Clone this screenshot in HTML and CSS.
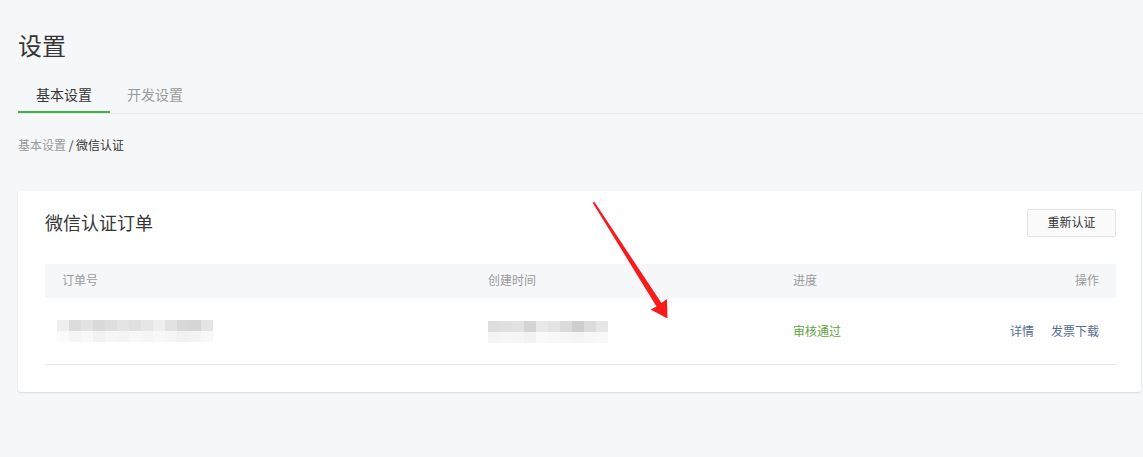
FILE: index.html
```html
<!DOCTYPE html>
<html lang="zh-CN">
<head>
<meta charset="utf-8">
<title>设置</title>
<link rel="stylesheet" href="styles.css">
</head>
<body>
<div class="page">
  <h1 class="title">设置</h1>
  <div class="tabs">
    <div class="tab active">基本设置</div>
    <div class="tab">开发设置</div>
  </div>
  <div class="crumb"><span class="crumb-link">基本设置</span> / 微信认证</div>
  <div class="card">
    <div class="card-head">
      <div class="card-title">微信认证订单</div>
      <button class="btn">重新认证</button>
    </div>
    <div class="table">
      <div class="thead">
        <div class="cell">订单号</div>
        <div class="cell">创建时间</div>
        <div class="cell">进度</div>
        <div class="cell right">操作</div>
      </div>
      <div class="trow">
        <div class="cell">
          <div class="mosaic first">
            <div class="m-row top">
              <i style="background:#eeeeee"></i><i style="background:#dcdcdc"></i><i style="background:#e2e2e2"></i><i style="background:#dadada"></i><i style="background:#dedede"></i><i style="background:#e4e4e4"></i><i style="background:#e0e0e0"></i><i style="background:#e6e6e6"></i><i style="background:#eeeeee"></i><i style="background:#e2e2e2"></i><i style="background:#d8d8d8"></i><i style="background:#d6d6d6"></i><i style="background:#e4e4e4"></i>
            </div>
            <div class="m-row bottom">
              <i style="background:#fafafa"></i><i style="background:#f5f5f5"></i><i style="background:#f8f8f8"></i><i style="background:#f2f2f2"></i><i style="background:#f6f6f6"></i><i style="background:#f4f4f4"></i><i style="background:#f7f7f7"></i><i style="background:#f5f5f5"></i><i style="background:#f8f8f8"></i><i style="background:#f6f6f6"></i><i style="background:#f1f1f1"></i><i style="background:#f3f3f3"></i><i style="background:#f8f8f8"></i>
            </div>
          </div>
        </div>
        <div class="cell">
          <div class="mosaic">
            <div class="m-row top">
              <i style="background:#dedede"></i><i style="background:#e0e0e0"></i><i style="background:#e2e2e2"></i><i style="background:#d4d4d4"></i><i style="background:#e8e8e8"></i><i style="background:#e4e4e4"></i><i style="background:#dadada"></i><i style="background:#cecece"></i><i style="background:#dcdcdc"></i><i style="background:#e6e6e6"></i>
            </div>
            <div class="m-row bottom">
              <i style="background:#f4f4f4"></i><i style="background:#f6f6f6"></i><i style="background:#f5f5f5"></i><i style="background:#f2f2f2"></i><i style="background:#fafafa"></i><i style="background:#f8f8f8"></i><i style="background:#f6f6f6"></i><i style="background:#f4f4f4"></i><i style="background:#f7f7f7"></i><i style="background:#f8f8f8"></i>
            </div>
          </div>
        </div>
        <div class="cell status">审核通过</div>
        <div class="cell right links"><a>详情</a><a>发票下载</a></div>
      </div>
    </div>
  </div>
</div>
<svg class="arrow" width="1143" height="457" viewBox="0 0 1143 457" aria-hidden="true">
  <polygon points="592.5,202.5 594.5,202 661.5,303 667,299 667.5,318.5 650.5,309.5 656.5,306.5" fill="#f71b1b"/>
</svg>
</body>
</html>
```
FILE: styles.css
```css
* { box-sizing: border-box; }
html, body {
  margin: 0;
  padding: 0;
  background: #f6f7f9;
  font-family: "Noto Sans CJK SC", "Noto Sans", sans-serif;
  color: #353535;
}
.page {
  padding: 28px 0 0 18px;
  height: 457px;
  overflow: hidden;
}
.title {
  margin: 0;
  font-size: 24px;
  font-weight: normal;
  line-height: 34px;
  color: #353535;
}
.tabs {
  display: flex;
  margin-top: 16px;
  border-bottom: 1px solid #e7e7e7;
}
.tab {
  padding: 0 17px;
  font-size: 14px;
  line-height: 32px;
  height: 35px;
  color: #9a9a9a;
  text-align: center;
}
.tab.active {
  width: 92px;
  color: #353535;
  border-bottom: 2px solid #3eb341;
  margin-bottom: -1px;
}
.crumb {
  margin-top: 22px;
  font-size: 12px;
  line-height: 18px;
  color: #353535;
}
.crumb-link { color: #9a9a9a; }
.card {
  margin-top: 37px;
  width: 1123px;
  background: #fff;
  border-radius: 3px;
  box-shadow: 0 1px 2px rgba(0,0,0,0.12);
  padding: 18px 25px 27px 27px;
}
.card-head {
  display: flex;
  justify-content: space-between;
  align-items: center;
  height: 28px;
}
.card-title {
  font-size: 18px;
  line-height: 28px;
  color: #353535;
  margin-bottom: 3px;
}
.btn {
  width: 89px;
  height: 28px;
  border: 1px solid #e4e4e4;
  border-radius: 2px;
  background: #fafafa;
  font-family: inherit;
  font-size: 12px;
  color: #353535;
  padding: 0 0 3px;
}
.table {
  margin-top: 27px;
}
.thead, .trow {
  display: grid;
  grid-template-columns: 426px 305px 1fr 220px;
  align-items: center;
}
.thead {
  height: 34px;
  background: #f6f7f9;
  font-size: 12px;
  color: #9a9a9a;
  padding-bottom: 3px;
}
.trow {
  height: 67px;
  border-bottom: 1px solid #e7e7e7;
  font-size: 12px;
  padding-bottom: 1px;
}
.cell { padding: 0 17px; }
.right { text-align: right; }
.status { color: #5fa345; }
.links a {
  color: #576b95;
  margin-left: 17px;
}
.mosaic { display: flex; flex-direction: column; margin-top: 3px; }
.mosaic.first { margin-left: -5px; margin-top: 1px; }
.m-row { display: flex; height: 11px; }
.m-row i { display: block; width: 12px; height: 11px; }
.arrow {
  position: absolute;
  left: 0;
  top: 0;
  pointer-events: none;
}
```
